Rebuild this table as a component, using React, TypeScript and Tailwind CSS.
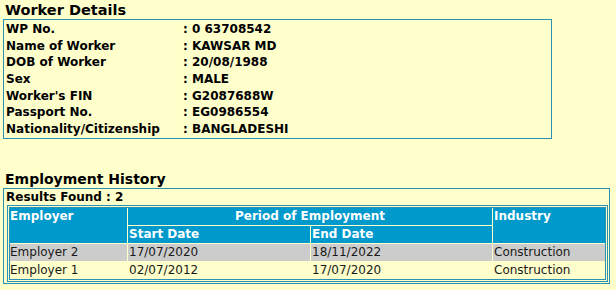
import React from "react";

const details: [string, string][] = [
  ["WP No.", "0 63708542"],
  ["Name of Worker", "KAWSAR MD"],
  ["DOB of Worker", "20/08/1988"],
  ["Sex", "MALE"],
  ["Worker's FIN", "G2087688W"],
  ["Passport No.", "EG0986554"],
  ["Nationality/Citizenship", "BANGLADESHI"],
];

const rows = [
  { emp: "Employer 2", start: "17/07/2020", end: "18/11/2022", ind: "Construction", bg: "bg-[#cccccc]" },
  { emp: "Employer 1", start: "02/07/2012", end: "17/07/2020", ind: "Construction", bg: "bg-[#ffffcc]" },
];

export default function App() {
  return (
    <div
      className="w-[616px] h-[290px] bg-[#ffffcc] text-black overflow-hidden"
      style={{ fontFamily: '"DejaVu Sans", Verdana, sans-serif' }}
    >
      <h2 className="pl-[5px] pt-[1px] text-[14.5px] leading-[18px] font-bold">Worker Details</h2>
      <div className="ml-[3px] w-[549px] border border-[#2b91b3] pt-[1px]">
        {details.map(([k, v]) => (
          <div key={k} className="flex h-[16.7px] items-center text-[12px] font-bold leading-[15px]">
            <div className="w-[179px] pl-[2px] whitespace-nowrap">{k}</div>
            <div>: {v}</div>
          </div>
        ))}
      </div>

      <h2 className="pl-[5px] mt-[31px] text-[14px] leading-[18px] font-bold">Employment History</h2>
      <div className="ml-[3px] w-[607px] border border-[#2b91b3] pb-[1px]">
        <div className="pl-[2px] h-[16px] text-[12px] font-bold leading-[16px]">Results Found : 2</div>
        <div className="ml-[3px] mr-[1px] border border-[#2b91b3] p-[1px]">
          <div className="border border-[#2b91b3] bg-[#ffffcc] grid grid-cols-[117px_182px_181px_112px] gap-px text-[12px] leading-[17px]">
            <div className="row-span-2 bg-[#0099cc] text-white font-bold">Employer</div>
            <div className="col-span-2 bg-[#0099cc] text-white font-bold text-center">Period of Employment</div>
            <div className="row-span-2 bg-[#0099cc] text-white font-bold pl-[1px]">Industry</div>
            <div className="bg-[#0099cc] text-white font-bold pl-[1px]">Start Date</div>
            <div className="bg-[#0099cc] text-white font-bold pl-[1px]">End Date</div>
            {rows.map((r) => (
              <React.Fragment key={r.emp}>
                <div className={`${r.bg} text-[#1a1a1a]`}>{r.emp}</div>
                <div className={`${r.bg} pl-[1px] text-[#1a1a1a]`}>{r.start}</div>
                <div className={`${r.bg} pl-[1px] text-[#1a1a1a]`}>{r.end}</div>
                <div className={`${r.bg} pl-[1px] text-[#1a1a1a]`}>{r.ind}</div>
              </React.Fragment>
            ))}
          </div>
        </div>
      </div>
    </div>
  );
}
